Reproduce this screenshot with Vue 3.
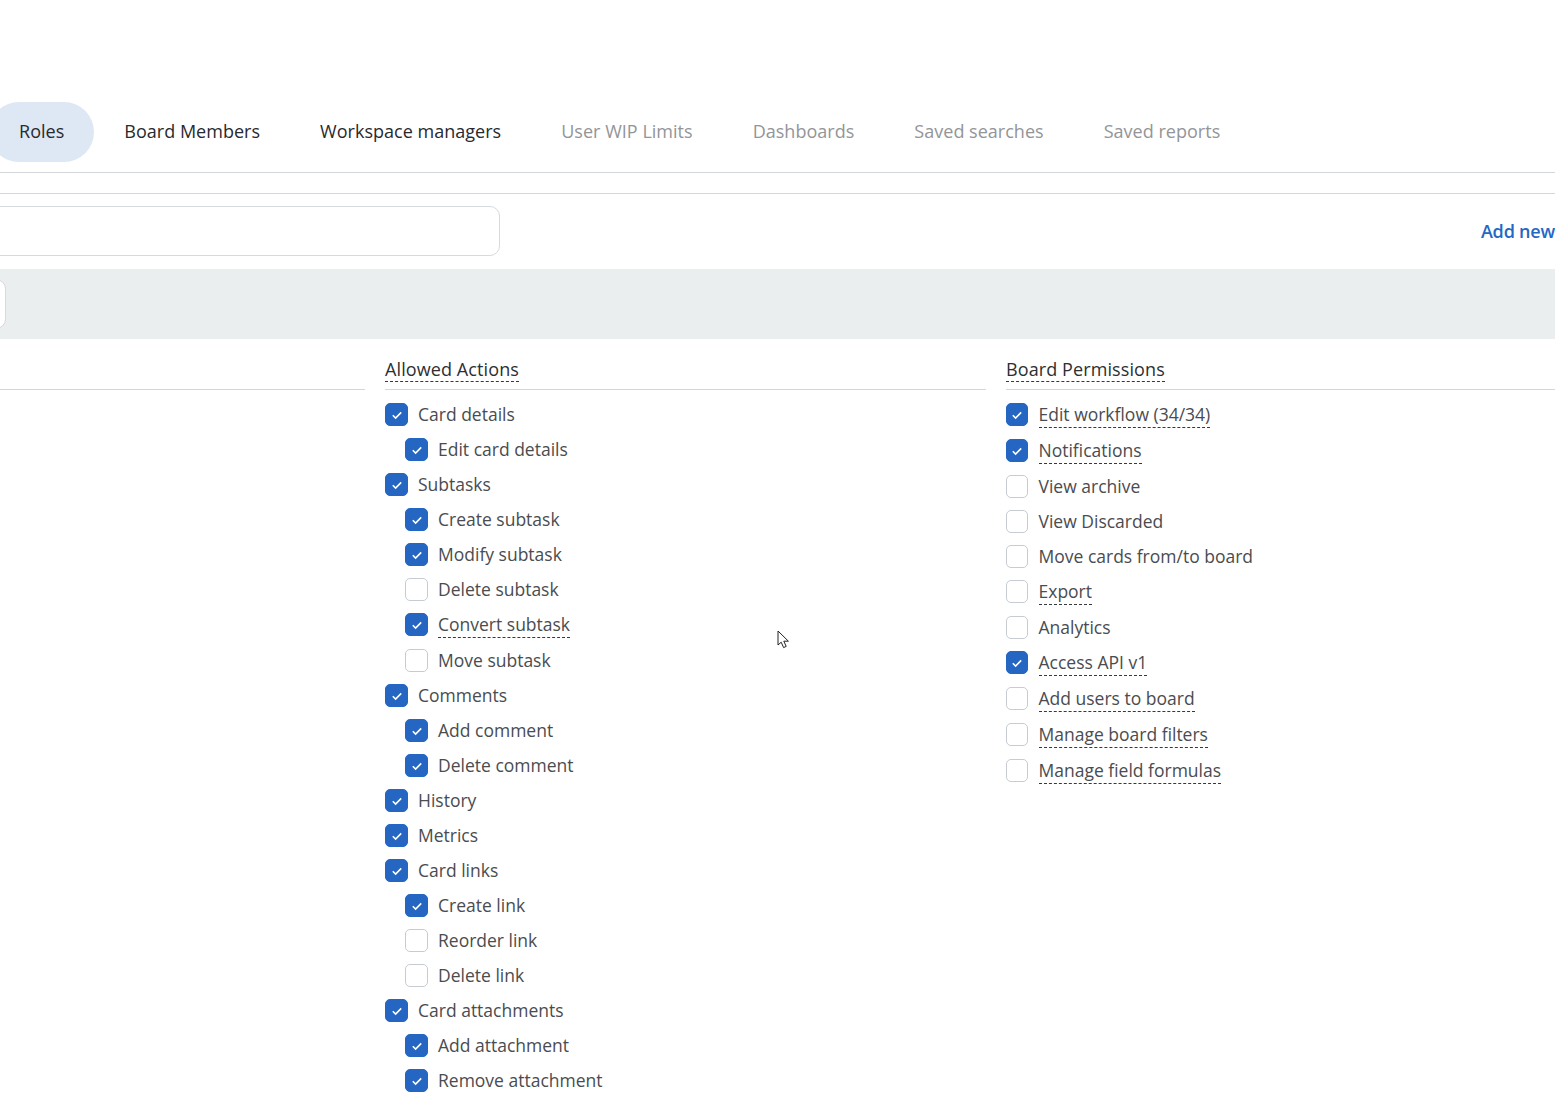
<script setup>
const tabs = [
  { label: 'Roles', active: true },
  { label: 'Board Members' },
  { label: 'Workspace managers' },
  { label: 'User WIP Limits', muted: true },
  { label: 'Dashboards', muted: true },
  { label: 'Saved searches', muted: true },
  { label: 'Saved reports', muted: true },
]

const actions = [
  { label: 'Card details', on: true },
  { label: 'Edit card details', on: true, sub: true },
  { label: 'Subtasks', on: true },
  { label: 'Create subtask', on: true, sub: true },
  { label: 'Modify subtask', on: true, sub: true },
  { label: 'Delete subtask', sub: true },
  { label: 'Convert subtask', on: true, sub: true, hint: true },
  { label: 'Move subtask', sub: true },
  { label: 'Comments', on: true },
  { label: 'Add comment', on: true, sub: true },
  { label: 'Delete comment', on: true, sub: true },
  { label: 'History', on: true },
  { label: 'Metrics', on: true },
  { label: 'Card links', on: true },
  { label: 'Create link', on: true, sub: true },
  { label: 'Reorder link', sub: true },
  { label: 'Delete link', sub: true },
  { label: 'Card attachments', on: true },
  { label: 'Add attachment', on: true, sub: true },
  { label: 'Remove attachment', on: true, sub: true },
]

const permissions = [
  { label: 'Edit workflow (34/34)', on: true, hint: true },
  { label: 'Notifications', on: true, hint: true },
  { label: 'View archive' },
  { label: 'View Discarded' },
  { label: 'Move cards from/to board' },
  { label: 'Export', hint: true },
  { label: 'Analytics' },
  { label: 'Access API v1', on: true, hint: true },
  { label: 'Add users to board', hint: true },
  { label: 'Manage board filters', hint: true },
  { label: 'Manage field formulas', hint: true },
]

const columns = [
  { title: 'Allowed Actions', items: actions },
  { title: 'Board Permissions', items: permissions },
]
</script>

<template>
  <div class="page">
    <nav class="tabs">
      <a
        v-for="tab in tabs"
        :key="tab.label"
        class="tab"
        :class="{ active: tab.active, muted: tab.muted }"
      >{{ tab.label }}</a>
    </nav>

    <div class="toolbar">
      <div class="search"></div>
      <a class="add-new">Add new</a>
    </div>

    <div class="band">
      <div class="band-input"></div>
    </div>

    <div class="columns">
      <section class="column blank">
        <h3 class="column-head"></h3>
      </section>
      <section v-for="col in columns" :key="col.title" class="column">
        <h3 class="column-head"><span class="hint-title">{{ col.title }}</span></h3>
        <ul class="checks">
          <li
            v-for="item in col.items"
            :key="item.label"
            class="check-row"
            :class="{ sub: item.sub, tall: item.hint }"
          >
            <span class="box" :class="{ on: item.on }">
              <svg v-if="item.on" viewBox="0 0 12 12" width="12" height="12" fill="none">
                <path d="M1.8 6.2 4.6 9 10.2 3.4" stroke="white" stroke-width="1.6" />
              </svg>
            </span>
            <span class="label" :class="{ hint: item.hint }">{{ item.label }}</span>
          </li>
        </ul>
      </section>
    </div>

    <svg class="cursor" viewBox="0 0 14 20" width="14" height="20">
      <path
        d="M1 1V15L4.2 12.2 6.6 17.6 9.2 16.4 6.8 11.2H11.4Z"
        fill="white"
        stroke="#222"
        stroke-width="1"
      />
    </svg>
  </div>
</template>

<style scoped>
.page {
  position: relative;
  height: 1100px;
  overflow: hidden;
  padding-top: 102px;
  box-sizing: border-box;
  font-family: "Open Sans", sans-serif;
  font-size: 17.5px;
  color: #4a4c4f;
  background: #fff;
}

.tabs {
  display: flex;
  height: 60px;
  margin-left: -11px;
}

.tab {
  display: flex;
  align-items: center;
  padding: 0 30px 2px;
  border-radius: 30px;
  font-size: 18px;
  font-weight: 500;
  letter-spacing: 0.02px;
  color: #272a2e;
  white-space: nowrap;
}

.tab.active {
  background: #dde8f4;
}

.tab.muted {
  color: #939598;
}

.toolbar {
  position: relative;
  display: flex;
  align-items: center;
  justify-content: space-between;
  height: 50px;
  margin-top: 10px;
  padding: 33px 0 13px;
  border-top: 1px solid #d3d7da;
}

.toolbar::before {
  content: "";
  position: absolute;
  left: 0;
  right: 0;
  top: 20px;
  border-top: 1px solid #d3d7da;
}

.search {
  width: 519px;
  height: 48px;
  margin-left: -21px;
  background: #fff;
  border: 1px solid #d6dadd;
  border-radius: 10px;
}

.add-new {
  font-size: 18px;
  font-weight: 600;
  letter-spacing: -0.2px;
  color: #2467c4;
  white-space: nowrap;
}

.band {
  height: 70px;
  display: flex;
  align-items: center;
  background: #eaeeef;
}

.band-input {
  width: 19px;
  height: 48px;
  margin-left: -15px;
  background: #fff;
  border: 1px solid #d6dadd;
  border-radius: 10px;
}

.columns {
  display: flex;
  gap: 20px;
  padding-top: 18px;
}

.column {
  flex: none;
  width: 601px;
}

.column.blank {
  width: 365px;
}

.column:last-child {
  width: 549px;
}

.column:last-child .box {
  width: 22px;
  margin-right: 10.5px;
}

.column-head {
  height: 33px;
  margin: 0 0 6px;
  border-bottom: 1px solid #d3d7da;
  box-sizing: border-box;
  font-size: 18px;
  font-weight: 500;
  letter-spacing: 0.1px;
  line-height: 24px;
  color: #2c2f33;
}

.hint-title {
  display: inline-block;
  height: 24px;
  border-bottom: 1px dashed #35383c;
}

.checks {
  list-style: none;
  margin: 0;
  padding: 0;
}

.check-row {
  display: flex;
  align-items: flex-start;
  height: 35px;
  padding-top: 7px;
  box-sizing: border-box;
}

.check-row.tall {
  height: 36px;
}

.check-row.sub {
  padding-left: 20px;
}

.box {
  flex: none;
  display: flex;
  align-items: center;
  justify-content: center;
  width: 23px;
  height: 23px;
  margin-right: 10px;
  background: #fff;
  border: 1px solid #c6ccd2;
  border-radius: 5px;
  box-sizing: border-box;
}

.box.on {
  background: #2466c2;
  border-color: #2466c2;
}

.label {
  margin-top: -1px;
  padding-bottom: 1px;
  line-height: 24px;
  white-space: nowrap;
}

.label.hint {
  border-bottom: 1px dashed #35383c;
}

.cursor {
  position: absolute;
  left: 777px;
  top: 630px;
}
</style>

<style>
body {
  background: #fff;
}
</style>
